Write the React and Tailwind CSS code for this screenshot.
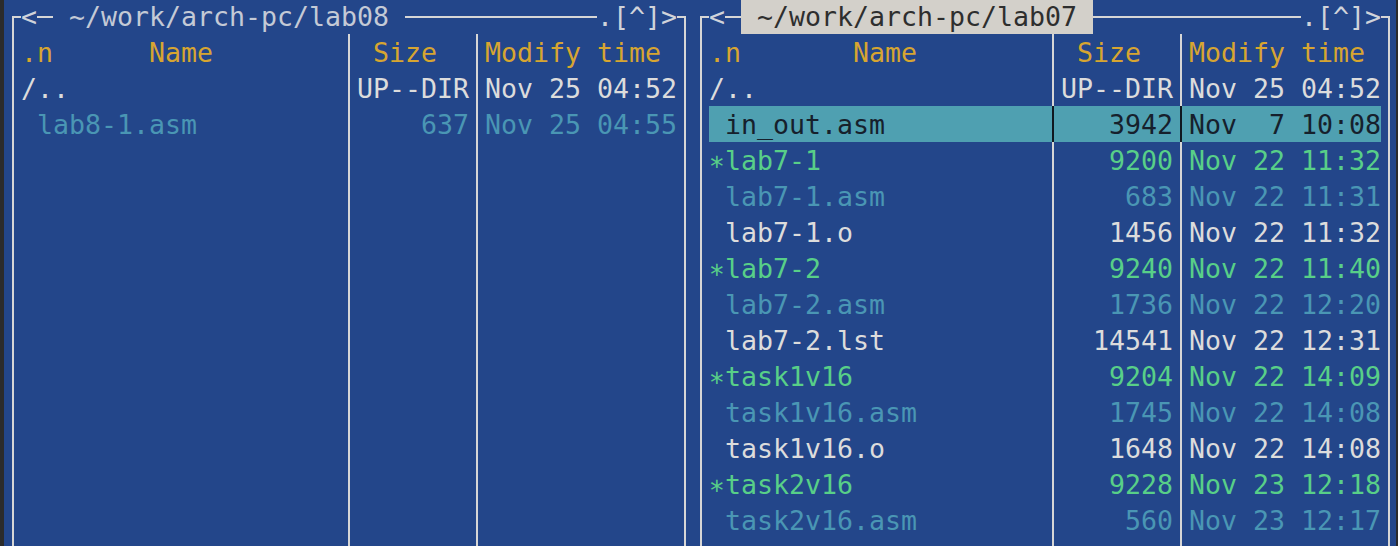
import React from 'react';

const WHITE = 'text-[#dcdcdc]';
const GREEN = 'text-[#58cf88]';
const ASM = 'text-[#4a96b4]';
const STAR = '\u2217';

const leftRows = [
  { name: '/..', size: 'UP--DIR', date: 'Nov 25 04:52', color: WHITE },
  { name: ' lab8-1.asm', size: '637', date: 'Nov 25 04:55', color: ASM },
];

const rightRows = [
  { name: '/..', size: 'UP--DIR', date: 'Nov 25 04:52', color: WHITE },
  { name: ' in_out.asm', size: '3942', date: 'Nov  7 10:08', sel: true },
  { name: STAR + 'lab7-1', size: '9200', date: 'Nov 22 11:32', color: GREEN },
  { name: ' lab7-1.asm', size: '683', date: 'Nov 22 11:31', color: ASM },
  { name: ' lab7-1.o', size: '1456', date: 'Nov 22 11:32', color: WHITE },
  { name: STAR + 'lab7-2', size: '9240', date: 'Nov 22 11:40', color: GREEN },
  { name: ' lab7-2.asm', size: '1736', date: 'Nov 22 12:20', color: ASM },
  { name: ' lab7-2.lst', size: '14541', date: 'Nov 22 12:31', color: WHITE },
  { name: STAR + 'task1v16', size: '9204', date: 'Nov 22 14:09', color: GREEN },
  { name: ' task1v16.asm', size: '1745', date: 'Nov 22 14:08', color: ASM },
  { name: ' task1v16.o', size: '1648', date: 'Nov 22 14:08', color: WHITE },
  { name: STAR + 'task2v16', size: '9228', date: 'Nov 23 12:18', color: GREEN },
  { name: ' task2v16.asm', size: '560', date: 'Nov 23 12:17', color: ASM },
];

function Sep({ dark }) {
  return (
    <div className="w-4 flex justify-center self-stretch">
      <div className={`w-[2px] ${dark ? 'bg-[#101820]' : 'bg-[#d6d6d6]'}`} />
    </div>
  );
}

function Row({ name, size, date, color, sel, nameW, header }) {
  const tone = sel ? 'bg-[#4fa0b1] text-[#16202c]' : header ? 'text-[#d7a531]' : color;
  return (
    <div className={`flex h-[36px] leading-[36px] whitespace-pre ${tone}`}>
      <div className={`${nameW} pt-[1px]`}>{name}</div>
      <Sep dark={sel} />
      <div className="w-[112px] pt-[1px] text-right">{size}</div>
      <Sep dark={sel} />
      <div className="w-[192px] pt-[1px]">{date}</div>
    </div>
  );
}

function Filler({ nameW }) {
  return (
    <div className="flex flex-1">
      <div className={nameW} />
      <Sep />
      <div className="w-[112px]" />
      <Sep />
      <div className="w-[192px]" />
    </div>
  );
}

function Panel({ width, nameW, title, active, header, rows }) {
  return (
    <div className={`${width} h-full pt-[16px] px-[7px] flex flex-col`}>
      <div className="flex-1 border-x-2 border-t-2 border-[#d6d6d6] px-[7px] flex flex-col">
        <div className="-mt-[18px] h-[34px] leading-[33px] flex whitespace-pre text-[#d0d3da]">
          <span className="w-4 bg-[#23468a]">{'<'}</span>
          <span className="w-4" />
          <span
            className={
              active
                ? 'bg-[#d3d0ca] text-[#2e2e2e]'
                : 'bg-[#23468a] text-[#c4cad6]'
            }
          >
            {' ' + title + ' '}
          </span>
          <span className="flex-1" />
          <span className="bg-[#23468a]">{'.[^]>'}</span>
        </div>
        <Row {...header} nameW={nameW} header />
        {rows.map((r, i) => (
          <Row key={i} {...r} nameW={nameW} />
        ))}
        <Filler nameW={nameW} />
      </div>
    </div>
  );
}

export default function App() {
  return (
    <div className="w-[1398px] h-[546px] bg-[#2b2b2b] overflow-hidden font-['DejaVu_Sans_Mono',monospace] text-[26.58px]">
      <div className="ml-[4px] w-[1392px] h-full bg-[#23468a] pl-[1px] flex overflow-hidden">
        <Panel
          width="w-[688px] shrink-0"
          nameW="w-[320px]"
          title="~/work/arch-pc/lab08"
          header={{ name: '.n      Name', size: ' Size  ', date: 'Modify time' }}
          rows={leftRows}
        />
        <Panel
          width="w-[704px] shrink-0"
          nameW="w-[336px]"
          title="~/work/arch-pc/lab07"
          active
          header={{ name: '.n       Name', size: ' Size  ', date: 'Modify time' }}
          rows={rightRows}
        />
      </div>
    </div>
  );
}
